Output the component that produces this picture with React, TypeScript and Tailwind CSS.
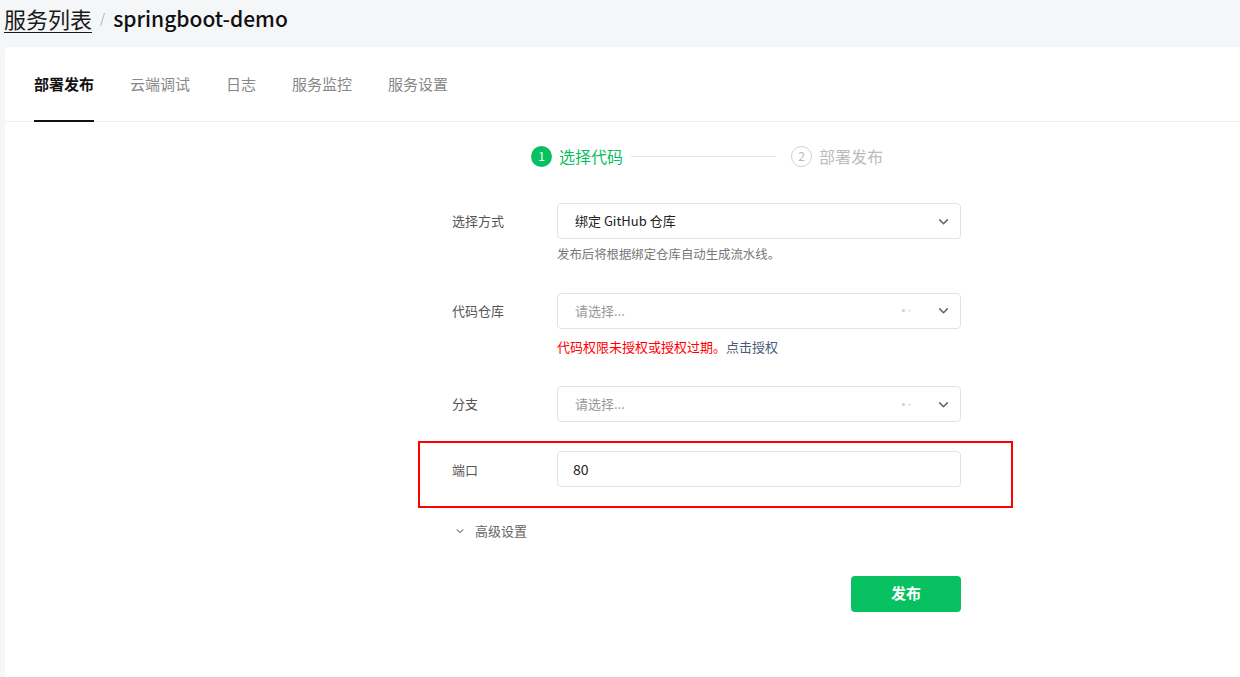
import React from 'react';

const font = { fontFamily: '"Noto Sans CJK SC", "Noto Sans", sans-serif' };

const Chevron = ({ className = '' }: { className?: string }) => (
  <svg viewBox="0 0 12 12" className={className} fill="none" stroke="currentColor" strokeWidth="1.4">
    <path d="M2.5 4.5 6 8l3.5-3.5" strokeLinecap="round" strokeLinejoin="round" />
  </svg>
);

const tabs = ['部署发布', '云端调试', '日志', '服务监控', '服务设置'];

const SelectBox = ({ value, placeholder, dots }: { value?: string; placeholder?: string; dots?: boolean }) => (
  <div className="flex h-[36px] w-[404px] items-center rounded-[4px] border border-[#e3e3e3] bg-white pl-[17px] pr-[10px]">
    <span className={`flex-1 text-[13px] ${value ? 'text-[#222]' : 'text-[#999]'}`}>{value || placeholder}</span>
    {dots && (
      <span className="mr-[26px] flex gap-[3px]">
        <span className="h-[3px] w-[3px] rounded-full bg-[#cfcfcf]" />
        <span className="h-[3px] w-[3px] rounded-full bg-[#ececec]" />
      </span>
    )}
    <Chevron className="h-[13px] w-[13px] text-[#666]" />
  </div>
);

export default function App() {
  return (
    <div className="min-h-[677px] bg-[#f5f6f8] pl-[5px]" style={font}>
      {/* Breadcrumb */}
      <div className="flex h-[47px] items-start pt-[3px] -ml-[1px]">
        <span className="text-[22px] leading-[30px] text-[#1a1a1a] underline underline-offset-[4px] decoration-[1px]">服务列表</span>
        <span className="mx-[8px] text-[13px] leading-[30px] text-[#b0b0b0]">/</span>
        <span className="text-[21px] leading-[30px] font-medium text-[#111]">springboot-demo</span>
      </div>

      {/* Card */}
      <div className="min-h-[630px] rounded-tl-[4px] bg-white">
        <div className="flex gap-[36px] border-b border-[#f0f0f0] px-[29px] pt-[26px]">
          {tabs.map((t, i) => (
            <div
              key={t}
              className={`pb-[25px] text-[15px] leading-[22px] ${i === 0 ? 'border-b-2 border-[#111] font-semibold text-[#111]' : 'border-b-2 border-transparent text-[#888]'}`}
              style={{ marginBottom: -1 }}
            >
              {t}
            </div>
          ))}
        </div>

        {/* Steps */}
        <div className="ml-[526px] mt-[22px] flex items-center">
          <span className="flex h-[21px] w-[21px] items-center justify-center rounded-full bg-[#07c160] text-[12px] text-white">1</span>
          <span className="ml-[7px] text-[16px] text-[#07c160]">选择代码</span>
          <span className="mx-[8px] h-px w-[145px] bg-[#e6e6e6]" />
          <span className="ml-[7px] flex h-[21px] w-[21px] items-center justify-center rounded-full border border-[#d0d0d0] text-[12px] text-[#bbb]">2</span>
          <span className="ml-[7px] text-[16px] text-[#bbb]">部署发布</span>
        </div>

        {/* Form */}
        <div className="ml-[413px] mt-[35px] w-[595px] text-[13px]">
          <div className="flex px-[34px]">
            <div className="w-[105px] pt-[8px] text-[#555]">选择方式</div>
            <div>
              <SelectBox value="绑定 GitHub 仓库" />
              <div className="mt-[6px] text-[12.4px] text-[#777]">发布后将根据绑定仓库自动生成流水线。</div>
            </div>
          </div>

          <div className="mt-[29px] flex px-[34px]">
            <div className="w-[105px] pt-[8px] text-[#555]">代码仓库</div>
            <div>
              <SelectBox placeholder="请选择..." dots />
              <div className="mt-[8px] text-[13px]">
                <span className="text-[#f00]">代码权限未授权或授权过期。</span>
                <span className="text-[#4a5a78]">点击授权</span>
              </div>
            </div>
          </div>

          <div className="mt-[30px] flex px-[34px]">
            <div className="w-[105px] pt-[8px] text-[#555]">分支</div>
            <SelectBox placeholder="请选择..." dots />
          </div>

          <div className="mt-[19px] flex h-[67px] border-2 border-[#f00] px-[32px] pt-[8px]">
            <div className="w-[105px] pt-[9px] text-[#555]">端口</div>
            <div className="flex h-[36px] w-[404px] items-center rounded-[4px] border border-[#e3e3e3] px-[15px] text-[14px] text-[#222]">80</div>
          </div>

          <div className="mt-[13px] flex items-center px-[37px] text-[#666]">
            <Chevron className="h-[10px] w-[10px] text-[#888]" />
            <span className="ml-[10px]">高级设置</span>
          </div>

          <div className="mt-[35px] flex justify-end pr-[52px]">
            <button className="h-[36px] w-[110px] rounded-[4px] bg-[#07c160] text-[15px] font-semibold text-white">发布</button>
          </div>
        </div>
      </div>
    </div>
  );
}
